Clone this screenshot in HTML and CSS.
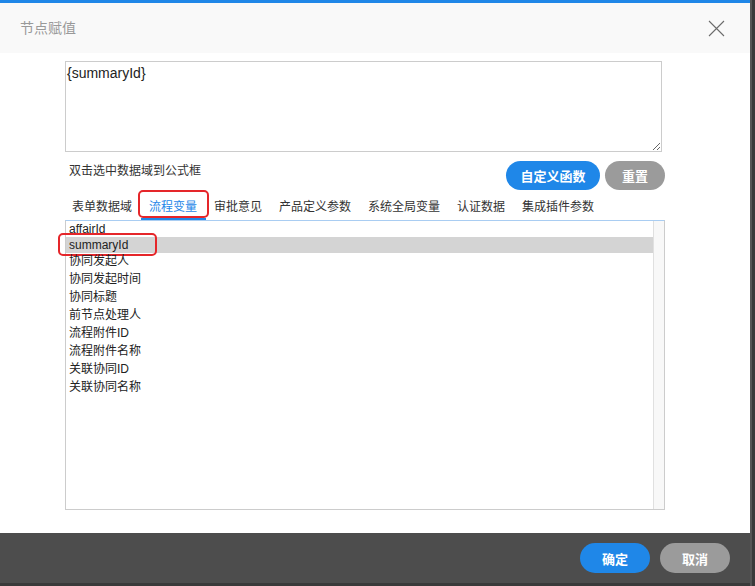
FILE: index.html
```html
<!DOCTYPE html>
<html lang="zh">
<head>
<meta charset="utf-8">
<title>节点赋值</title>
<link rel="stylesheet" href="styles.css">
</head>
<body>
<div class="page">
  <div class="dialog">
    <div class="header">
      <span class="title">节点赋值</span>
      <svg class="close" width="17" height="17" viewBox="0 0 17 17">
        <path d="M1 1 L16 16 M16 1 L1 16" stroke="#6b6b6b" stroke-width="1.1" fill="none"/>
      </svg>
    </div>
    <div class="body">
      <div class="content">
        <textarea class="formula" readonly>{summaryId}</textarea>
        <div class="toolrow">
          <span class="hint">双击选中数据域到公式框</span>
          <div class="actions">
            <button class="btn btn-blue btn-func">自定义函数</button>
            <button class="btn btn-gray btn-reset">重置</button>
          </div>
        </div>
        <div class="tabs">
          <span class="tab">表单数据域</span>
          <span class="tab active">流程变量<span class="mark mark-tab"></span></span>
          <span class="tab">审批意见</span>
          <span class="tab">产品定义参数</span>
          <span class="tab">系统全局变量</span>
          <span class="tab">认证数据</span>
          <span class="tab">集成插件参数</span>
        </div>
        <div class="list">
          <div class="items">
            <div class="item latin first">affairId</div>
            <div class="item latin selected">summaryId<span class="mark mark-item"></span></div>
            <div class="item">协同发起人</div>
            <div class="item">协同发起时间</div>
            <div class="item">协同标题</div>
            <div class="item">前节点处理人</div>
            <div class="item">流程附件ID</div>
            <div class="item">流程附件名称</div>
            <div class="item">关联协同ID</div>
            <div class="item">关联协同名称</div>
          </div>
          <div class="scrollbar"></div>
        </div>
      </div>
    </div>
    <div class="footer">
      <button class="btn btn-blue btn-foot">确定</button>
      <button class="btn btn-gray btn-foot">取消</button>
    </div>
  </div>
  <div class="edge"></div>
</div>
</body>
</html>
```

FILE: styles.css
```css
html, body {
  margin: 0;
  padding: 0;
}
body {
  background: #3a3a3a;
  font-family: "Liberation Sans", "Noto Sans CJK SC", sans-serif;
  color: #333;
  width: 755px;
  height: 586px;
  overflow: hidden;
}
.page {
  display: flex;
  height: 586px;
}
.dialog {
  width: 750px;
  height: 583px;
  background: #fff;
  display: flex;
  flex-direction: column;
  box-sizing: border-box;
  border-top: 3px solid #1f87e8;
}
.edge {
  flex: 1;
  background: #3a3a3a;
  border-left: 2px solid #555;
}
.header {
  height: 50px;
  background: #f9f9f9;
  display: flex;
  align-items: center;
  justify-content: space-between;
  padding: 0 25px 0 20px;
  flex-shrink: 0;
}
.title {
  font-size: 14px;
  color: #999;
  line-height: 20px;
}
.close {
  display: block;
}
.body {
  flex: 1;
  display: flex;
}
.content {
  margin-left: 65px;
  width: 600px;
  display: flex;
  flex-direction: column;
}
.formula {
  margin: 8px 0 0 0;
  width: 597px;
  height: 91px;
  box-sizing: border-box;
  border: 1px solid #ccc;
  border-radius: 0;
  padding: 3px 1px;
  font-family: "Liberation Sans", "Noto Sans CJK SC", sans-serif;
  font-size: 14px;
  line-height: 17px;
  color: #222;
  outline: none;
  display: block;
}
.toolrow {
  display: flex;
  justify-content: space-between;
  align-items: flex-start;
  margin-top: 9px;
  height: 29px;
}
.hint {
  font-size: 12px;
  line-height: 18px;
  padding-left: 4px;
  padding-top: 1px;
  color: #333;
}
.actions {
  display: flex;
  gap: 5px;
}
.btn {
  border: none;
  color: #fff;
  font-family: "Liberation Sans", "Noto Sans CJK SC", sans-serif;
  font-weight: bold;
  font-size: 13px;
  padding: 0;
  border-radius: 15px;
  cursor: pointer;
}
.btn-blue {
  background: #1f87e8;
}
.btn-gray {
  background: #9b9b9b;
}
.btn-func {
  width: 94px;
  height: 29px;
}
.btn-reset {
  width: 60px;
  height: 29px;
}
.tabs {
  display: flex;
  margin-left: -1.5px;
  height: 30px;
}
.tab {
  position: relative;
  font-size: 12px;
  line-height: 24px;
  padding: 5px 8.5px 0 8.5px;
  height: 23px;
  border-bottom: 2px solid transparent;
  color: #333;
  white-space: nowrap;
}
.tab.active {
  color: #1f87e8;
  border-bottom-color: #1f87e8;
}
.mark {
  position: absolute;
  border: 2px solid #e5262a;
  border-radius: 5px;
  box-sizing: border-box;
  pointer-events: none;
}
.mark-tab {
  left: -3px;
  top: 0;
  width: 71px;
  height: 28px;
}
.list {
  height: 290px;
  box-sizing: border-box;
  border: 1px solid #ccc;
  border-top-color: #a9cdf2;
  display: flex;
}
.items {
  flex: 1;
}
.item {
  position: relative;
  font-size: 12px;
  line-height: 16px;
  height: 16px;
  padding: 0 0 2px 3px;
  color: #222;
  white-space: nowrap;
}
.item.latin {
  padding-bottom: 0;
}
.item.selected {
  background: #d4d4d4;
}
.mark-item {
  left: -8px;
  top: -4px;
  width: 99px;
  height: 23px;
}
.scrollbar {
  width: 10px;
  background: #f8f8f8;
  border-left: 1px solid #e0e0e0;
}
.footer {
  height: 50px;
  background: #4d4d4d;
  display: flex;
  justify-content: flex-end;
  align-items: center;
  gap: 10px;
  padding-right: 20px;
  flex-shrink: 0;
}
.btn-foot {
  width: 70px;
  height: 30px;
}
```
